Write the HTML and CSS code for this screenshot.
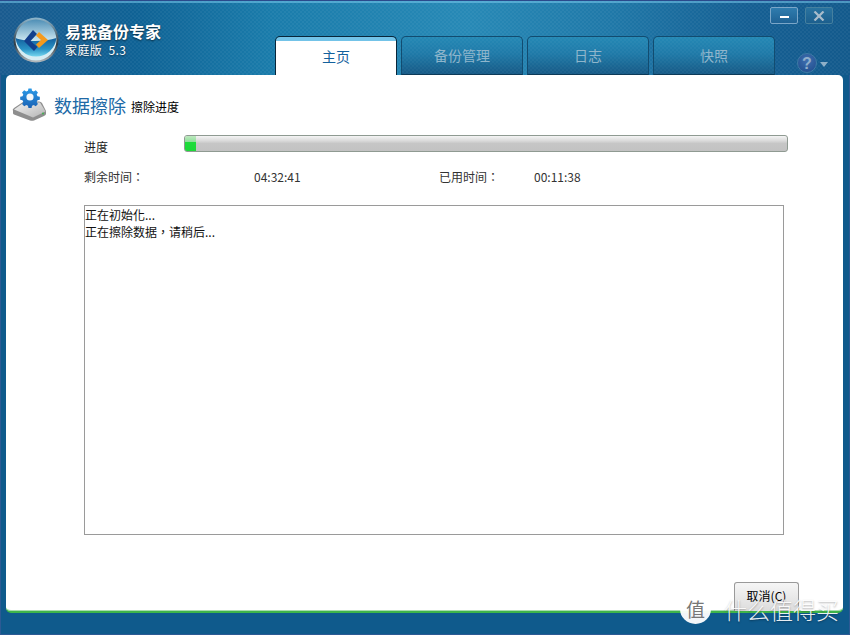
FILE: index.html
```html
<!DOCTYPE html>
<html lang="zh">
<head>
<meta charset="utf-8">
<title>易我备份专家</title>
<link rel="stylesheet" href="styles.css">
</head>
<body>
<div class="window">
  <header class="header">
    <div class="brand">
      <svg class="logo" width="46" height="46" viewBox="0 0 46 46">
        <defs>
          <linearGradient id="sky" x1="0" y1="0" x2="0" y2="1">
            <stop offset="0" stop-color="#4f8fb6"/>
            <stop offset=".55" stop-color="#d5edf4"/>
          </linearGradient>
          <linearGradient id="sea" x1="0" y1="0" x2="0" y2="1">
            <stop offset="0" stop-color="#125f9c"/>
            <stop offset=".6" stop-color="#2a93c6"/>
            <stop offset="1" stop-color="#74d6ee"/>
          </linearGradient>
          <linearGradient id="rim" x1="0" y1="0" x2="0" y2="1">
            <stop offset="0" stop-color="#8fb7cd"/>
            <stop offset=".6" stop-color="#2f3b44"/>
            <stop offset="1" stop-color="#b5bcc0"/>
          </linearGradient>
        </defs>
        <circle cx="23" cy="23" r="22.5" fill="url(#rim)"/>
        <circle cx="23" cy="23" r="20.5" fill="url(#sky)"/>
        <path d="M2.6 21 C12 25 32 25 43.4 21 A20.5 20.5 0 0 1 2.6 21Z" fill="url(#sea)"/>
        <path d="M20 13 L11 24 L21 34 L24.5 30 L17.5 24 L24 17Z" fill="#123f8c"/>
        <path d="M26 15 L35 23 L26 31 L23 27.5 L28 23 L23 18.5Z" fill="#f59a1d"/>
      </svg>
      <div class="brand-text">
        <div class="brand-name">易我备份专家</div>
        <div class="brand-edition">家庭版&nbsp;&nbsp;5.3</div>
      </div>
    </div>
    <nav class="tabs">
      <div class="tab tab-active">主页</div>
      <div class="tab">备份管理</div>
      <div class="tab">日志</div>
      <div class="tab">快照</div>
    </nav>
    <div class="tools">
      <div class="win-buttons">
        <div class="win-btn win-min"><span class="min-bar"></span></div>
        <div class="win-btn win-close">
          <svg width="12" height="10" viewBox="0 0 12 10"><path d="M1.5 .5L10.5 9.5M10.5 .5L1.5 9.5" stroke="#a9bccb" stroke-width="2.2"/></svg>
        </div>
      </div>
      <div class="help">
        <div class="help-ball">?</div>
        <span class="help-caret"></span>
      </div>
    </div>
  </header>

  <main class="panel">
    <div class="title-row">
      <svg class="title-icon" width="36" height="36" viewBox="0 0 36 36">
        <defs>
          <linearGradient id="disk" x1="0" y1="0" x2="1" y2="1">
            <stop offset="0" stop-color="#f2f2f2"/>
            <stop offset="1" stop-color="#b4b4b4"/>
          </linearGradient>
          <linearGradient id="gear" x1="0" y1="0" x2="0" y2="1">
            <stop offset="0" stop-color="#2a9ae8"/>
            <stop offset="1" stop-color="#1a62b4"/>
          </linearGradient>
        </defs>
        <path d="M1 24 Q0 22.500 2 21 L11 15 Q12 14.500 14 14.500 L27 14.500 Q29 14.500 30 16 L34 24 L34 27 Q34 28 32 29 L22 33.500 Q20 34 18 33.500 L2 27.500 Q1 27 1 26Z" fill="#8e8e8e"/>
        <path d="M2 22.500 L12 15.500 L28 15.500 L33.500 24.500 L21 30.500 Z" fill="url(#disk)"/>
        <circle cx="31" cy="26.500" r="1" fill="#3fb34f"/>
        <g transform="translate(18 10) scale(.78)" fill="url(#gear)">
          <path d="M-2 -11h4l.6 3 2.200 1 2.600-1.600 2.800 2.800-1.600 2.600 1 2.200 3 .6v4l-3 .6-1 2.200 1.600 2.600-2.800 2.800-2.600-1.600-2.200 1-.6 3h-4l-.6-3-2.200-1-2.600 1.600-2.800-2.800 1.600-2.600-1-2.200-3-.6v-4l3-.6 1-2.200-1.600-2.600 2.800-2.800 2.600 1.600 2.200-1z"/>
          <circle r="4.600" fill="#f4f8fb"/>
        </g>
      </svg>
      <span class="title-main">数据擦除</span>
      <span class="title-sub">擦除进度</span>
    </div>

    <div class="status">
      <div class="progress-row">
        <span class="label">进度</span>
        <div class="bar"><div class="bar-fill" style="width:1.83%"></div></div>
      </div>
      <div class="time-row">
        <span class="time-label" lang="zh-Hant">剩余时间：</span>
        <span class="time-value">04:32:41</span>
        <span class="time-label" lang="zh-Hant">已用时间：</span>
        <span class="time-value">00:11:38</span>
      </div>
      <div class="log" lang="zh-Hant">
        <div>正在初始化...</div>
        <div>正在擦除数据，请稍后...</div>
      </div>
    </div>

    <div class="actions">
      <button class="cancel">取消(C)</button>
    </div>
  </main>
  <footer class="footer"></footer>

  <div class="watermark">
    <span class="wm-badge">值</span>
    <span class="wm-text">什么值得买</span>
  </div>
</div>
</body>
</html>
```

FILE: styles.css
```css
* { box-sizing: border-box; }

html, body {
  margin: 0;
  padding: 0;
  width: 850px;
  height: 635px;
  overflow: hidden;
}

body {
  font-family: "Noto Sans CJK SC", "Liberation Sans", sans-serif;
  font-size: 12px;
  color: #222;
}

.window {
  position: relative;
  width: 850px;
  height: 635px;
  display: flex;
  flex-direction: column;
  background: #0f5a8c;
  border: 1px solid #2c5a94;
  border-top: 0;
}

.header {
  height: 75px;
  margin: 0 -1px;
  flex: none;
  display: flex;
  border-top: 1px solid #2a4a8c;
  background:
    repeating-conic-gradient(rgba(255,255,255,.045) 0 25%, transparent 0 50%) 0 0 / 4px 4px,
    linear-gradient(90deg, #1a5b8f 0, #0f6295 16%, #1a7cab 32%, #2789b6 55%, #1f78a8 72%, #155f93 88%, #135a8c 100%);
  box-shadow: inset 0 3px 0 -1px rgba(120,200,235,.55);
}

.brand {
  width: 275px;
  flex: none;
  display: flex;
  padding: 16px 0 0 13px;
}

.logo { flex: none; }

.brand-text {
  margin: 4px 0 0 6px;
  color: #fff;
}

.brand-name {
  font-size: 16px;
  font-weight: 700;
  line-height: 20px;
  text-shadow: 0 1px 2px rgba(0,0,0,.6);
}

.brand-edition {
  font-size: 12px;
  line-height: 18px;
  letter-spacing: .4px;
  text-shadow: 0 1px 2px rgba(0,0,0,.5);
}

.tabs {
  display: flex;
  gap: 4px;
  align-self: flex-end;
  margin-right: -8px;
}

.tab {
  width: 122px;
  height: 39px;
  display: flex;
  align-items: center;
  justify-content: center;
  padding-bottom: 1px;
  font-size: 14px;
  color: #8fb6cc;
  border: 1px solid #124c70;
  border-bottom-color: #0c3a58;
  border-radius: 5px 5px 0 0;
  background:
    repeating-conic-gradient(rgba(255,255,255,.03) 0 25%, transparent 0 50%) 0 0 / 4px 4px,
    linear-gradient(180deg, #2488b5 0, #1f7aa8 45%, #175a86 100%);
}

.tab-active {
  color: #13619d;
  background: linear-gradient(180deg, #73c3e8 0, #73c3e8 4px, #fff 4px);
  border-color: #08263a;
  border-bottom: 0;
}

.tools {
  flex: 1;
  display: flex;
  flex-direction: column;
  padding: 6px 17px 0 0;
  align-items: flex-end;
}

.win-buttons {
  display: flex;
  gap: 7px;
}

.win-btn {
  width: 28px;
  height: 17px;
  display: flex;
  align-items: center;
  justify-content: center;
  border-radius: 2px;
}

.win-min {
  border: 1px solid #7aa6c8;
  background: linear-gradient(180deg, #2f7cae, #1f6294);
}

.min-bar {
  width: 9px;
  height: 2px;
  margin-top: 2px;
  background: #fff;
}

.win-close {
  border: 1px solid #45809f;
  background: linear-gradient(180deg, #2a739f, #1c5f8e);
}

.help {
  margin: 29px 5px 0 0;
  display: flex;
  align-items: center;
  gap: 3px;
}

.help-ball {
  width: 20px;
  height: 20px;
  border-radius: 50%;
  text-align: center;
  font: 700 16px/19px "Liberation Sans", sans-serif;
  color: #8faecb;
  background: radial-gradient(circle at 50% 35%, #3f6fb0, #1d4a8a);
  border: 1px solid #3e7aa6;
}

.help-caret {
  width: 0;
  height: 0;
  margin-top: 2px;
  border: 4px solid transparent;
  border-top: 5px solid #8fb0c8;
  border-bottom: 0;
}

.panel {
  flex: 1;
  margin: 0 6px 0 5px;
  display: flex;
  flex-direction: column;
  background: #fff;
  border-radius: 5px;
  border-bottom: 2px solid #3fb54a;
  box-shadow: inset 0 -1px 0 #a9dcae;
}

.title-row {
  height: 47px;
  flex: none;
  display: flex;
  align-items: center;
  padding: 12px 0 0 6px;
}

.title-icon { flex: none; }

.title-main {
  margin-left: 6px;
  font-size: 18px;
  line-height: 24px;
  color: #2069a6;
}

.title-sub {
  margin: 3px 0 0 5px;
  font-size: 12px;
  color: #000;
}

.status {
  flex: 1;
  padding: 13px 0 0 78px;
}

.progress-row {
  display: flex;
  align-items: center;
  height: 17px;
}

.label {
  width: 100px;
  padding-top: 6px;
  flex: none;
}

.bar {
  width: 604px;
  height: 17px;
  border: 1px solid #8f9a92;
  border-radius: 3px;
  background: linear-gradient(180deg, #f4f4f4 0, #dcdcdc 30%, #c6c6c6 50%, #c2c2c2 100%);
  overflow: hidden;
}

.bar-fill {
  height: 100%;
  background: linear-gradient(180deg, #bfe8c0 0, #8fe09a 38%, #1fdc3c 40%, #1cd838 100%);
}

.time-row {
  margin-top: 16px;
  display: grid;
  grid-template-columns: 170px 185px 95px auto;
  line-height: 18px;
  color: #333;
}

.time-label {
  font-family: "Noto Sans CJK TC", "Liberation Sans", sans-serif;
}

.log {
  margin-top: 19px;
  width: 700px;
  height: 330px;
  border: 1px solid #9a9a9a;
  font-family: "Noto Sans CJK TC", "Liberation Sans", sans-serif;
  line-height: 17px;
  color: #111;
}

.actions {
  flex: none;
  display: flex;
  justify-content: flex-end;
  padding: 0 44px 0 0;
}

.cancel {
  width: 65px;
  height: 29px;
  padding: 0 0 3px;
  font: 12px "Noto Sans CJK SC", "Liberation Sans", sans-serif;
  color: #000;
  border: 1px solid #9a9a9a;
  border-bottom: 0;
  border-radius: 3px 3px 0 0;
  background: linear-gradient(180deg, #f6f6f6, #dcdcdc);
}

.footer {
  height: 21px;
  flex: none;
}

.watermark {
  position: absolute;
  right: 10px;
  bottom: 10px;
  display: flex;
  align-items: center;
  gap: 13px;
  color: rgba(255,255,255,.92);
  text-shadow: 0 1px 2px rgba(0,0,0,.35);
}

.wm-badge {
  width: 31px;
  height: 30px;
  border-radius: 50%;
  background: rgba(255,255,255,.95);
  color: #777;
  text-align: center;
  font-size: 19px;
  line-height: 30px;
  text-shadow: none;
}

.wm-text {
  font-size: 23px;
  line-height: 30px;
  font-weight: 300;
}
```
